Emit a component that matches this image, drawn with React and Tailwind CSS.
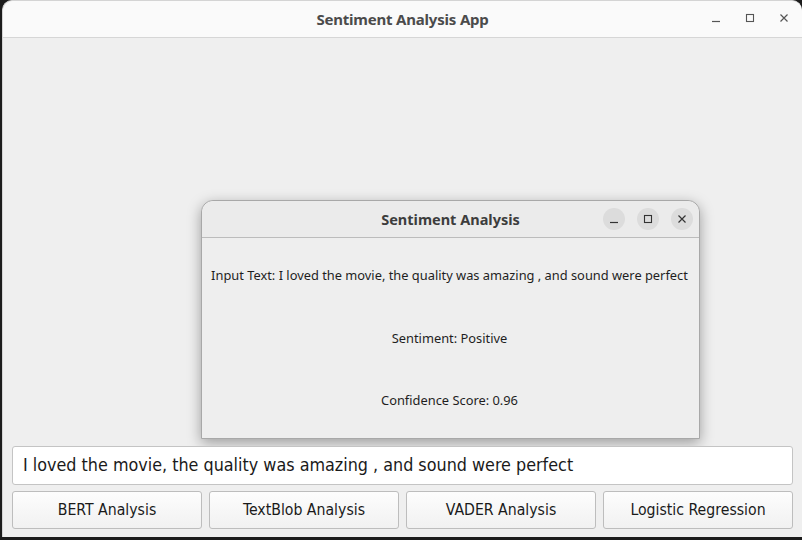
import React from "react";

function TitleGlyph({ kind }) {
  if (kind === "min") {
    return (
      <svg width="10" height="10" viewBox="0 0 10 10">
        <path d="M1 8.5h8" stroke="currentColor" strokeWidth="1.2" />
      </svg>
    );
  }
  if (kind === "max") {
    return (
      <svg width="10" height="10" viewBox="0 0 10 10">
        <rect x="1.5" y="1.5" width="7" height="7" fill="none" stroke="currentColor" strokeWidth="1.1" />
      </svg>
    );
  }
  return (
    <svg width="10" height="10" viewBox="0 0 10 10">
      <path d="M1.5 1.5l7 7M8.5 1.5l-7 7" stroke="currentColor" strokeWidth="1.2" />
    </svg>
  );
}

const buttons = ["BERT Analysis", "TextBlob Analysis", "VADER Analysis", "Logistic Regression"];

export default function App() {
  const sans = { fontFamily: '"Noto Sans", "DejaVu Sans", sans-serif' };
  const qt = { fontFamily: '"DejaVu Sans Condensed", "DejaVu Sans", sans-serif', fontStretch: "condensed" };

  return (
    <div className="w-[802px] h-[540px] bg-[#1c1c1c] overflow-hidden">
      <div className="relative ml-[2px] w-[800px] h-[537px] bg-[#efefef] rounded-t-[10px] flex flex-col border-t border-l border-[#d4d4d4]">
        {/* main title bar */}
        <div className="h-[37px] shrink-0 bg-[#fafafa] rounded-t-[10px] border-b border-[#d6d6d6] flex items-center relative">
          <div className="flex-1 text-center text-[15px] font-bold text-[#4b4b4b] tracking-[-0.2px]" style={sans}>
            Sentiment Analysis App
          </div>
          <div className="absolute right-[13px] top-[12px] flex gap-[24px] text-[#555]">
            <TitleGlyph kind="min" />
            <TitleGlyph kind="max" />
            <TitleGlyph kind="close" />
          </div>
        </div>

        {/* body */}
        <div className="flex-1 relative">
          {/* dialog window */}
          <div
            className="absolute left-[198px] top-[162px] w-[499px] h-[239px] bg-[#eeeeee] rounded-t-[12px] border border-[#a8a8a8] shadow-[0_4px_14px_rgba(0,0,0,0.35)] flex flex-col"
            style={sans}
          >
            <div className="h-[37px] shrink-0 bg-[#ebebeb] rounded-t-[12px] border-b border-[#bcbcbc] flex items-center relative">
              <div className="flex-1 text-center text-[14.5px] font-bold text-[#3d3d3d] pt-[1px]">Sentiment Analysis</div>
              <div className="absolute right-[6px] top-[7px] flex gap-[12px] text-[#333]">
                {["min", "max", "close"].map((k) => (
                  <div key={k} className="w-[22px] h-[22px] rounded-full bg-[#dcdcdc] flex items-center justify-center">
                    <TitleGlyph kind={k} />
                  </div>
                ))}
              </div>
            </div>
            <div className="flex-1 flex flex-col items-center text-[12.85px] text-[#1e1e1e] pr-[2px]">
              <div className="mt-[27px] h-[20px] leading-[20px] whitespace-nowrap">
                Input Text: I loved the movie, the quality was amazing , and sound were perfect
              </div>
              <div className="mt-[43px] h-[20px] leading-[20px]">Sentiment: Positive</div>
              <div className="mt-[42px] h-[20px] leading-[20px]">Confidence Score: 0.96</div>
            </div>
          </div>

          {/* input + buttons at bottom */}
          <div className="absolute left-0 right-0 bottom-0 px-[9px] pb-[8px] flex flex-col gap-[6px]" style={qt}>
            <div className="h-[39px] bg-white border border-[#c4c4c4] rounded-[3px] flex items-center px-[10px] text-[17.8px] text-[#1a1a1a]">
              I loved the movie, the quality was amazing , and sound were perfect
            </div>
            <div className="grid grid-cols-4 gap-[7px]">
              {buttons.map((b) => (
                <div
                  key={b}
                  className="h-[38px] rounded-[3px] border border-[#bdbdbd] bg-gradient-to-b from-[#fdfdfd] to-[#f1f1f1] flex items-center justify-center text-[15.7px] text-[#1a1a1a]"
                >
                  {b}
                </div>
              ))}
            </div>
          </div>
        </div>
      </div>
    </div>
  );
}
